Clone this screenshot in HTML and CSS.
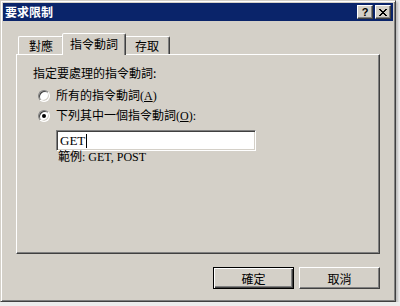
FILE: index.html
```html
<!DOCTYPE html>
<html>
  <head>
    <title>要求限制</title>
    <link rel="stylesheet" href="styles.css">
  </head>
  <body>
    <div class="window">
      <div class="title-bar">
        <span class="title">要求限制</span>
        <div class="title-buttons">
          <span class="cap-button help">?</span>
          <span class="cap-button close">
            <svg width="8" height="7" viewBox="0 0 8 7">
              <path d="M0 0h2v1h1v1h2v-1h1v-1h2v1h-1v1h-1v1h-1v1h1v1h1v1h1v1h-2v-1h-1v-1h-2v1h-1v1h-2v-1h1v-1h1v-1h1v-1h-1v-1h-1v-1h-1z" fill="#000"/>
            </svg>
          </span>
        </div>
      </div>

      <div class="content">
        <div class="tabs">
          <div class="tab">對應</div>
          <div class="tab active">指令動詞</div>
          <div class="tab">存取</div>
        </div>

        <div class="panel">
          <div class="caption">指定要處理的指令動詞:</div>
          <div class="options">
            <div class="option">
              <span class="radio"></span>
              <span>所有的指令動詞(<u>A</u>)</span>
            </div>
            <div class="option">
              <span class="radio"><span class="dot"></span></span>
              <span>下列其中一個指令動詞(<u>O</u>):</span>
            </div>
          </div>
          <div class="verb-input">
            <div class="textbox">GET<span class="caret"></span></div>
            <div class="hint">範例: GET, POST</div>
          </div>
        </div>

        <div class="actions">
          <button class="default">確定</button>
          <button>取消</button>
        </div>
      </div>
    </div>
  </body>
</html>
```

FILE: styles.css
```css
body {
  margin: 0;
  background-color: #ececec;
  font-family: "Liberation Serif", "Noto Sans CJK TC", serif;
  font-size: 12px;
  color: #000;
}
.window {
  width: 396px;
  height: 302px;
  box-sizing: border-box;
  padding: 1px;
  background-color: #d4d0c8;
  border: 1px solid;
  border-color: #d4d0c8 #404040 #404040 #d4d0c8;
  box-shadow: inset 1px 1px #fff, inset -1px -1px #808080, 2px 2px 2px rgba(0, 0, 0, 0.2);
}
.title-bar {
  height: 18px;
  margin: 1px;
  background-color: #0a246a;
  display: flex;
  align-items: center;
  justify-content: space-between;
  padding: 0 2px 0 2px;
}
.title {
  color: #fff;
  font-family: "Noto Sans CJK TC", sans-serif;
  font-weight: bold;
  font-size: 12px;
  line-height: 14px;
}
.title-buttons {
  display: flex;
  gap: 2px;
}
.cap-button {
  width: 16px;
  height: 14px;
  box-sizing: border-box;
  background-color: #d4d0c8;
  border: 1px solid;
  border-color: #fff #404040 #404040 #fff;
  box-shadow: inset -1px -1px #808080;
  display: flex;
  align-items: center;
  justify-content: center;
}
.help {
  font-family: "Liberation Sans", sans-serif;
  font-weight: bold;
  font-size: 11px;
  line-height: 11px;
}
.content {
  padding: 11px 14px 0 14px;
}
.tabs {
  display: flex;
  align-items: flex-end;
  height: 21px;
  padding-left: 2px;
}
.tab {
  width: 46px;
  height: 18px;
  box-sizing: border-box;
  padding: 0;
  text-align: center;
  white-space: nowrap;
  border: 1px solid;
  border-bottom: none;
  border-color: #fff #404040 transparent #fff;
  border-radius: 2px 2px 0 0;
  box-shadow: inset -1px 0 #808080;
  line-height: 17px;
  font-family: "Noto Sans CJK TC", sans-serif;
}
.tab.active {
  width: 64px;
  height: 22px;
  margin: 0 -1px -1px -2px;
  line-height: 20px;
  background-color: #d4d0c8;
  position: relative;
  z-index: 1;
}
.tab.active + .tab {
  margin-left: -1px;
}
.panel {
  height: 200px;
  box-sizing: border-box;
  border: 1px solid;
  border-color: #fff #404040 #404040 #fff;
  box-shadow: inset -1px -1px #808080;
  padding: 10px 0 0 16px;
}
.caption {
  font-family: "Noto Sans CJK TC", sans-serif;
  line-height: 16px;
}
.options {
  padding: 8px 0 0 5px;
  display: flex;
  flex-direction: column;
  gap: 6px;
}
.option {
  display: flex;
  align-items: center;
  gap: 6px;
  height: 14px;
  line-height: 14px;
}
.option u {
  text-decoration: underline;
}
.radio {
  width: 12px;
  height: 12px;
  box-sizing: border-box;
  border-radius: 50%;
  background-color: #fff;
  border: 1px solid;
  border-color: #808080 #fff #fff #808080;
  box-shadow: inset 1px 1px #404040, inset -1px -1px #d4d0c8;
  display: flex;
  align-items: center;
  justify-content: center;
}
.dot {
  width: 4px;
  height: 4px;
  border-radius: 50%;
  background-color: #000;
}
.verb-input {
  padding: 7px 0 0 23px;
}
.textbox {
  width: 200px;
  height: 21px;
  box-sizing: border-box;
  background-color: #fff;
  border: 1px solid;
  border-color: #808080 #fff #fff #808080;
  box-shadow: inset 1px 1px #404040, inset -1px -1px #d4d0c8;
  padding: 2px 3px;
  line-height: 15px;
  font-size: 13px;
  display: flex;
  align-items: center;
}
.caret {
  width: 1px;
  height: 14px;
  background-color: #000;
  margin-left: 1px;
}
.hint {
  padding-left: 2px;
  line-height: 13px;
}
.actions {
  display: flex;
  justify-content: flex-end;
  gap: 5px;
  padding-top: 13px;
}
button {
  width: 81px;
  height: 22px;
  box-sizing: border-box;
  background-color: #d4d0c8;
  border: 1px solid;
  border-color: #fff #404040 #404040 #fff;
  box-shadow: inset -1px -1px #808080;
  font-family: "Noto Sans CJK TC", sans-serif;
  font-size: 12px;
  padding: 0;
  color: #000;
}
button.default {
  border: 1px solid #000;
  box-shadow: inset 1px 1px #fff, inset -1px -1px #404040, inset -2px -2px #808080;
}
```
